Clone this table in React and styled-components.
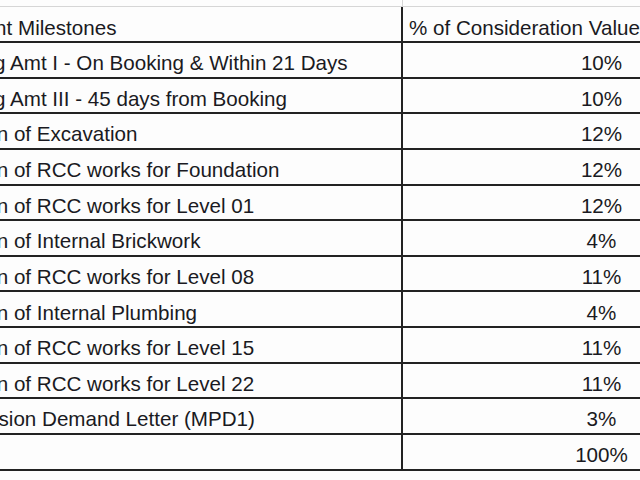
import React from "react";
import styled, { createGlobalStyle } from "styled-components";

const Global = createGlobalStyle`
  html, body { margin: 0; padding: 0; background: #fdfdfd; }
  body { overflow: hidden; }
`;

const Page = styled.div`
  width: 640px;
  height: 480px;
  overflow: hidden;
  background: #fdfdfd;
  font-family: "Liberation Sans", Arial, sans-serif;
  color: #1a1a22;
`;

const Sheet = styled.div`
  margin-left: -76px;
  width: 876px;
`;

const GridStrip = styled.div`
  display: grid;
  grid-template-columns: 479px 397px;
  height: 7px;
  box-sizing: border-box;
  border-bottom: 1px solid #d6d6d6;
`;

const StripCell = styled.div`
  border-right: ${(p) => (p.$first ? "1px solid #d6d6d6" : "none")};
`;

const Row = styled.div`
  display: grid;
  grid-template-columns: 479px 397px;
  box-sizing: border-box;
  height: ${(p) => (p.$header ? "36px" : "35.64px")};
  border-bottom: 2px solid #222;
`;

const Cell = styled.div`
  display: flex;
  align-items: flex-end;
  box-sizing: border-box;
  padding: ${(p) => (p.$first ? "0 6px 3.5px 7px" : "0 6px 3.5px 6px")};
  font-size: 20.6px;
  line-height: 21px;
  white-space: nowrap;
  justify-content: ${(p) => (p.$center ? "center" : "flex-start")};
  border-right: ${(p) => (p.$first ? "2px solid #222" : "none")};
`;

const Label = styled.span`
  margin-left: ${(p) => (p.$deep ? "-27px" : "0")};
`;

const rows = [
  ["Booking Amt I - On Booking & Within 21 Days", "10%"],
  ["Booking Amt III - 45 days from Booking", "10%"],
  ["Completion of Excavation", "12%", true],
  ["Completion of RCC works for Foundation", "12%", true],
  ["Completion of RCC works for Level 01", "12%", true],
  ["Completion of Internal Brickwork", "4%", true],
  ["Completion of RCC works for Level 08", "11%", true],
  ["Completion of Internal Plumbing", "4%", true],
  ["Completion of RCC works for Level 15", "11%", true],
  ["Completion of RCC works for Level 22", "11%", true],
  ["Possession Demand Letter (MPD1)", "3%"],
  ["", "100%"],
];

export default function App() {
  return (
    <Page>
      <Global />
      <Sheet>
        <GridStrip>
          <StripCell $first />
          <StripCell />
        </GridStrip>
        <Row $header>
          <Cell $first>Payment Milestones</Cell>
          <Cell>% of Consideration Value</Cell>
        </Row>
        {rows.map(([label, pct, deep], i) => (
          <Row key={i}>
            <Cell $first>
              <Label $deep={deep}>{label}</Label>
            </Cell>
            <Cell $center>{pct}</Cell>
          </Row>
        ))}
      </Sheet>
    </Page>
  );
}
